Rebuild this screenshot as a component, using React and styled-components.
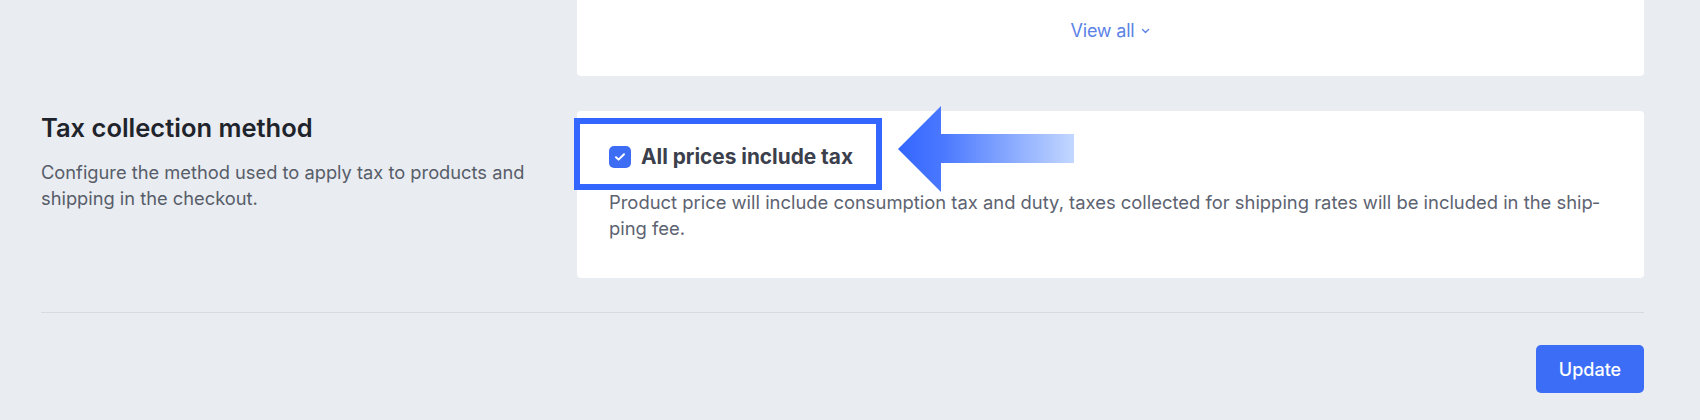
import React from "react";
import styled, { createGlobalStyle } from "styled-components";

const GlobalStyle = createGlobalStyle`
  html, body { margin: 0; padding: 0; }
  body {
    background: #e9ecf1;
    font-family: Inter, "Noto Sans", "Liberation Sans", sans-serif;
    -webkit-font-smoothing: antialiased;
  }
`;

const Page = styled.div`
  padding: 0 56px 0 41px;
`;

const Row = styled.div`
  display: grid;
  grid-template-columns: 536px 1fr;
  margin-top: ${(p) => p.$top || 0}px;
`;

const Card = styled.div`
  position: relative;
  background: #ffffff;
  border-radius: ${(p) => (p.$flatTop ? "0 0 4px 4px" : "4px")};
  padding: ${(p) => p.$pad};
`;

const ViewAll = styled.a`
  display: flex;
  align-items: center;
  justify-content: center;
  gap: 7px;
  font-size: 18px;
  line-height: 26px;
  color: #5b83e6;
  text-decoration: none;
  letter-spacing: -0.2px;
`;

const Title = styled.h2`
  margin: 1px 0 0;
  font-size: 25.5px;
  line-height: 32px;
  font-weight: 600;
  color: #1f232b;
`;

const Desc = styled.p`
  margin: 15px 0 0;
  max-width: 500px;
  font-size: 18.3px;
  line-height: 26px;
  color: #575d69;
`;

const CheckRow = styled.label`
  display: flex;
  align-items: center;
  gap: 10px;
  height: 28px;
`;

const Box = styled.span`
  width: 22px;
  height: 22px;
  border-radius: 5px;
  background: #3d6df5;
  display: flex;
  align-items: center;
  justify-content: center;
  flex-shrink: 0;
`;

const Label = styled.span`
  font-size: 20.8px;
  line-height: 28px;
  font-weight: 700;
  color: #3b404c;
`;

const Help = styled.p`
  margin: 18px 0 0;
  font-size: 18.4px;
  line-height: 26px;
  color: #5d6371;
`;

const Highlight = styled.div`
  position: absolute;
  left: -3px;
  top: 7px;
  width: 308px;
  height: 72px;
  box-sizing: border-box;
  border: 6px solid #3366ff;
  pointer-events: none;
`;

const ArrowSvg = styled.svg`
  position: absolute;
  left: 321px;
  top: -5px;
  pointer-events: none;
`;

const Divider = styled.hr`
  margin: 34px 0 0;
  border: 0;
  border-top: 1px solid #d6dae1;
`;

const Footer = styled.div`
  display: flex;
  justify-content: flex-end;
  padding-top: 32px;
`;

const Button = styled.button`
  width: 108px;
  height: 48px;
  border: 0;
  border-radius: 5px;
  background: #3b6df6;
  color: #ffffff;
  font-family: inherit;
  font-size: 18px;
  font-weight: 500;
  cursor: pointer;
`;

export default function App() {
  return (
    <>
      <GlobalStyle />
      <Page>
        <Row>
          <div />
          <Card $flatTop $pad="18px 0 32px">
            <ViewAll href="#">
              View all
              <svg width="9" height="6" viewBox="0 0 9 6">
                <path d="M1.5 1.5 L4.5 4.5 L7.5 1.5" fill="none" stroke="#5b83e6" strokeWidth="1.4" strokeLinecap="round" strokeLinejoin="round" />
              </svg>
            </ViewAll>
          </Card>
        </Row>
        <Row $top={35}>
          <div>
            <Title>Tax collection method</Title>
            <Desc>Configure the method used to apply tax to products and shipping in the checkout.</Desc>
          </div>
          <Card $pad="32px 32px 37px">
            <CheckRow>
              <Box>
                <svg width="12" height="10" viewBox="0 0 12 10">
                  <path d="M2 5.2 L4.6 7.6 L10 2.2" fill="none" stroke="#fff" strokeWidth="2" strokeLinecap="round" strokeLinejoin="round" />
                </svg>
              </Box>
              <Label>All prices include tax</Label>
            </CheckRow>
            <Help>
              Product price will include consumption tax and duty, taxes collected for shipping rates will be included in the ship{"\u00AD"}ping fee.
            </Help>
            <Highlight />
            <ArrowSvg width="176" height="86" viewBox="0 0 176 86">
              <defs>
                <linearGradient id="arrowGrad" x1="0" y1="0" x2="176" y2="0" gradientUnits="userSpaceOnUse">
                  <stop offset="0" stopColor="#3366ff" />
                  <stop offset="0.25" stopColor="#4a78ff" />
                  <stop offset="1" stopColor="#c3d7ff" />
                </linearGradient>
              </defs>
              <path d="M0 43 L43 0 L43 28 L176 28 L176 57 L43 57 L43 86 Z" fill="url(#arrowGrad)" />
            </ArrowSvg>
          </Card>
        </Row>
        <Divider />
        <Footer>
          <Button>Update</Button>
        </Footer>
      </Page>
    </>
  );
}
